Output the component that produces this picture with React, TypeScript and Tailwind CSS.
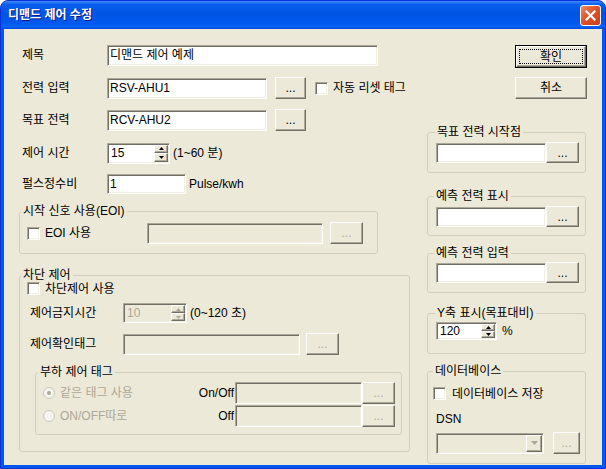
import React from "react";

// XP classic 3D edges
const sunken =
  "border border-t-[#aca899] border-l-[#aca899] border-r-white border-b-white shadow-[inset_1px_1px_0_#716f64,inset_-1px_-1px_0_#f1efe2]";
const raised =
  "border border-t-white border-l-white border-r-[#716f64] border-b-[#716f64] shadow-[inset_-1px_-1px_0_#aca899] bg-[#ece9d8]";

type P = { className?: string; children?: React.ReactNode; disabled?: boolean };

function TextBox({ className = "", children, disabled }: P) {
  return (
    <div
      className={`${sunken} ${disabled ? "bg-[#ece9d8] text-[#aca899]" : "bg-white"} flex items-center pl-[2px] overflow-hidden whitespace-nowrap leading-none shrink-0 ${className}`}
    >
      {children}
    </div>
  );
}

function Btn({ className = "", children, disabled }: P) {
  return (
    <div
      className={`${raised} flex items-center justify-center shrink-0 leading-none ${disabled ? "text-[#aca899]" : ""} ${className}`}
    >
      {children}
    </div>
  );
}

function Check() {
  return <div className={`w-[13px] h-[13px] bg-white shrink-0 ${sunken}`} />;
}

function Radio({ checked }: { checked?: boolean }) {
  return (
    <svg width="12" height="12" viewBox="0 0 12 12" className="shrink-0">
      <circle cx="6" cy="6" r="5.5" fill="#f4f3ee" stroke="#cac8bb" />
      {checked && <circle cx="6" cy="6" r="2" fill="#aca899" />}
    </svg>
  );
}

function Arrow({ up, color = "#000" }: { up?: boolean; color?: string }) {
  return (
    <svg width="5" height="3" viewBox="0 0 5 3">
      <path d={up ? "M0 3h5L2.5 0z" : "M0 0h5L2.5 3z"} fill={color} />
    </svg>
  );
}

function Spin({ className = "", children, disabled }: P) {
  const c = disabled ? "#aca899" : "#000";
  return (
    <div
      className={`${sunken} ${disabled ? "bg-[#ece9d8] text-[#aca899]" : "bg-white"} flex items-stretch shrink-0 leading-none ${className}`}
    >
      <div className="flex-1 flex items-center pl-[3px]">{children}</div>
      <div className="w-[16px] flex flex-col p-[1px]">
        <div className={`flex-1 ${raised} flex items-center justify-center`}>
          <Arrow up color={c} />
        </div>
        <div className={`flex-1 ${raised} flex items-center justify-center`}>
          <Arrow color={c} />
        </div>
      </div>
    </div>
  );
}

function Group({
  title,
  className = "",
  legend = "ml-[1px]",
  children,
}: {
  title: string;
  className?: string;
  legend?: string;
  children?: React.ReactNode;
}) {
  return (
    <fieldset className={`border border-[#d0d0bf] rounded-[3px] shrink-0 ${className}`}>
      <legend className={`px-[2px] leading-[14px] ${legend}`}>{title}</legend>
      {children}
    </fieldset>
  );
}

export default function App() {
  return (
    <div className="w-[606px] h-[469px] bg-white font-['Liberation_Sans','Noto_Sans_CJK_KR',sans-serif] text-[12px]">
      <div className="h-full flex flex-col rounded-t-[8px] overflow-hidden border border-[#0831d9] bg-[#0058ee]">
        {/* title bar */}
        <div className="h-[28px] shrink-0 flex items-center pl-[7px] pr-[4px] bg-[linear-gradient(180deg,#3d8ef9_0%,#0a5eee_12%,#0054e3_45%,#0058ee_80%,#0b65f6_92%,#0046d4_100%)]">
          <span className="text-white font-bold text-[12px] [text-shadow:1px_1px_#0a1883]">디맨드 제어 수정</span>
          <div className="ml-auto w-[21px] h-[21px] rounded-[3px] border border-white bg-[linear-gradient(135deg,#f08a68_0%,#e0522a_45%,#c8401a_100%)] flex items-center justify-center">
            <svg width="11" height="11" viewBox="0 0 11 11">
              <path d="M1.5 1.5l8 8M9.5 1.5l-8 8" stroke="#fff" strokeWidth="2.2" strokeLinecap="square" />
            </svg>
          </div>
        </div>

        {/* body */}
        <div className="flex-1 mx-[3px] mb-[3px] bg-[#ece9d8] flex text-black">
          {/* left column */}
          <div className="ml-[15px] w-[391px] flex flex-col">
            <div className="mt-[15px] h-[22px] flex items-center">
              <span className="ml-[3px] w-[85px]">제목</span>
              <TextBox className="w-[271px] h-[21px]">디맨드 제어 예제</TextBox>
            </div>
            <div className="mt-[11px] h-[22px] flex items-center">
              <span className="ml-[3px] w-[85px]">전력 입력</span>
              <TextBox className="w-[160px] h-[21px]">RSV-AHU1</TextBox>
              <Btn className="ml-[8px] w-[31px] h-[22px]">...</Btn>
              <div className="ml-[9px]">
                <Check />
              </div>
              <span className="ml-[5px]">자동 리셋 태그</span>
            </div>
            <div className="mt-[10px] h-[22px] flex items-center">
              <span className="ml-[3px] w-[85px]">목표 전력</span>
              <TextBox className="w-[160px] h-[21px]">RCV-AHU2</TextBox>
              <Btn className="ml-[8px] w-[31px] h-[22px]">...</Btn>
            </div>
            <div className="mt-[11px] h-[22px] flex items-center">
              <span className="ml-[3px] w-[85px]">제어 시간</span>
              <Spin className="w-[63px] h-[21px]">15</Spin>
              <span className="ml-[3px]">(1~60 분)</span>
            </div>
            <div className="mt-[9px] h-[22px] flex items-center">
              <span className="ml-[3px] w-[85px]">펄스정수비</span>
              <TextBox className="w-[79px] h-[20px]">1</TextBox>
              <span className="ml-[3px]">Pulse/kwh</span>
            </div>

            <Group title="시작 신호 사용(EOI)" className="mt-[9px] w-[359px] h-[50px]">
              <div className="mt-[4px] h-[22px] pl-[7px] flex items-center">
                <Check />
                <span className="ml-[5px] w-[102px]">EOI 사용</span>
                <TextBox disabled className="w-[176px] h-[21px]" />
                <Btn disabled className="ml-[7px] w-[33px] h-[22px]">...</Btn>
              </div>
            </Group>

            <Group title="차단 제어" className="mt-[14px] w-[391px] h-[184px]">
              <div className="h-[13px] pl-[7px] flex items-center">
                <Check />
                <span className="ml-[5px]">차단제어 사용</span>
              </div>
              <div className="mt-[8px] h-[20px] pl-[10px] flex items-center">
                <span className="w-[93px]">제어금지시간</span>
                <Spin disabled className="w-[64px] h-[20px]">10</Spin>
                <span className="ml-[3px]">(0~120 초)</span>
              </div>
              <div className="mt-[10px] h-[22px] pl-[10px] flex items-center">
                <span className="w-[93px]">제어확인태그</span>
                <TextBox disabled className="w-[177px] h-[21px]" />
                <Btn disabled className="ml-[6px] w-[33px] h-[22px]">...</Btn>
              </div>

              <Group title="부하 제어 태그" legend="ml-[2px]" className="mt-[10px] ml-[15px] w-[367px] h-[70px]">
                <div className="mt-[3px] h-[22px] pl-[7px] flex items-center">
                  <Radio checked />
                  <span className="ml-[5px] w-[129px] text-[#aca899]">같은 태그 사용</span>
                  <span className="w-[46px] text-right pr-[1px]">On/Off</span>
                  <TextBox disabled className="w-[127px] h-[22px]" />
                  <Btn disabled className="w-[33px] h-[22px]">...</Btn>
                </div>
                <div className="mt-[1px] h-[22px] pl-[7px] flex items-center">
                  <Radio />
                  <span className="ml-[5px] w-[129px] text-[#aca899]">ON/OFF따로</span>
                  <span className="w-[46px] text-right pr-[1px]">Off</span>
                  <TextBox disabled className="w-[127px] h-[22px]" />
                  <Btn disabled className="w-[33px] h-[22px]">...</Btn>
                </div>
              </Group>
            </Group>
          </div>

          {/* right column */}
          <div className="ml-[17px] w-[160px] flex flex-col">
            <div className="mt-[16px] self-end w-[72px] h-[23px] border border-black">
              <div className={`w-full h-full ${raised} flex items-center justify-center p-[2px]`}>
                <div className="w-full h-full border border-dotted border-black flex items-center justify-center leading-none">
                  확인
                </div>
              </div>
            </div>
            <Btn className="mt-[9px] self-end w-[72px] h-[22px]">취소</Btn>

            <Group title="목표 전력 시작점" legend="ml-[7px]" className="mt-[26px] w-[159px] h-[48px]">
              <div className="mt-[3px] pl-[8px] flex items-center">
                <TextBox className="w-[110px] h-[20px]" />
                <Btn className="w-[33px] h-[21px]">...</Btn>
              </div>
            </Group>
            <Group title="예측 전력 표시" legend="ml-[6px]" className="mt-[16px] w-[159px] h-[47px]">
              <div className="mt-[3px] pl-[8px] flex items-center">
                <TextBox className="w-[110px] h-[20px]" />
                <Btn className="w-[33px] h-[21px]">...</Btn>
              </div>
            </Group>
            <Group title="예측 전력 입력" legend="ml-[6px]" className="mt-[10px] w-[159px] h-[47px]">
              <div className="mt-[2px] pl-[8px] flex items-center">
                <TextBox className="w-[110px] h-[20px]" />
                <Btn className="w-[33px] h-[21px]">...</Btn>
              </div>
            </Group>
            <Group title="Y축 표시(목표대비)" legend="ml-[7px]" className="mt-[13px] w-[159px] h-[48px]">
              <div className="mt-[2px] pl-[8px] flex items-center">
                <Spin className="w-[61px] h-[18px]">120</Spin>
                <span className="ml-[5px]">%</span>
              </div>
            </Group>
            <Group title="데이터베이스" legend="ml-[5px]" className="mt-[10px] w-[159px] h-[100px]">
              <div className="mt-[9px] h-[13px] pl-[5px] flex items-center">
                <Check />
                <span className="ml-[6px]">데이터베이스 저장</span>
              </div>
              <div className="mt-[12px] pl-[8px] leading-[14px]">DSN</div>
              <div className="mt-[6px] pl-[8px] flex items-center">
                <div className={`${sunken} bg-[#ece9d8] w-[108px] h-[21px] flex justify-end p-[1px]`}>
                  <div className={`w-[16px] ${raised} flex items-center justify-center`}>
                    <svg width="7" height="4" viewBox="0 0 7 4">
                      <path d="M0 0h7L3.5 4z" fill="#aca899" />
                    </svg>
                  </div>
                </div>
                <Btn disabled className="ml-[9px] w-[27px] h-[22px]">...</Btn>
              </div>
            </Group>
          </div>
        </div>
      </div>
    </div>
  );
}
